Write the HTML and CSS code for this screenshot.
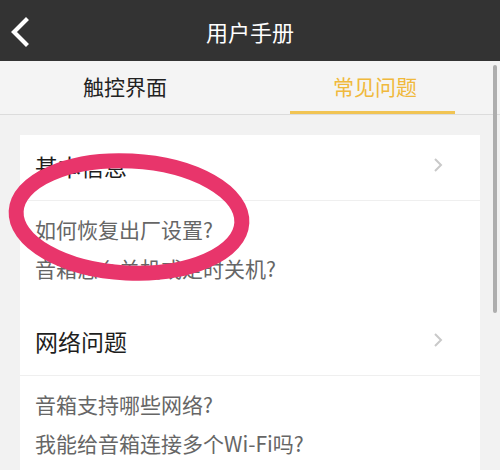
FILE: index.html
```html
<!DOCTYPE html>
<html lang="zh-CN">
<head>
<meta charset="utf-8">
<title>用户手册</title>
<link rel="stylesheet" href="styles.css">
</head>
<body>
<div class="page">
  <header class="topbar">
    <span class="back">
      <svg width="22" height="30" viewBox="0 0 22 30"><path d="M17 3 L5 15 L17 27" fill="none" stroke="#fff" stroke-width="4.2" stroke-linecap="square"/></svg>
    </span>
    <h1 class="title">用户手册</h1>
  </header>
  <nav class="tabs">
    <div class="tab">触控界面</div>
    <div class="tab active">常见问题</div>
  </nav>
  <main class="content">
    <section class="card">
      <div class="group">
        <div class="head"><span>基本信息</span><svg class="chev" width="10" height="16" viewBox="0 0 10 16"><path d="M2 2 L8 8 L2 14" fill="none" stroke="#c9c9c9" stroke-width="2"/></svg></div>
        <ul class="items">
          <li>如何恢复出厂设置?</li>
          <li>音箱怎么关机或定时关机?</li>
        </ul>
      </div>
      <div class="group">
        <div class="head"><span>网络问题</span><svg class="chev" width="10" height="16" viewBox="0 0 10 16"><path d="M2 2 L8 8 L2 14" fill="none" stroke="#c9c9c9" stroke-width="2"/></svg></div>
        <ul class="items">
          <li>音箱支持哪些网络?</li>
          <li>我能给音箱连接多个Wi-Fi吗?</li>
        </ul>
      </div>
    </section>
  </main>
  <div class="scrollbar"></div>
  <svg class="mark" width="260" height="140" viewBox="0 0 260 140">
    <ellipse cx="129" cy="71" rx="113" ry="56" fill="none" stroke="#e8356b" stroke-width="15" transform="rotate(3 129 71)"/>
  </svg>
</div>
</body>
</html>
```
FILE: styles.css
```css
* { box-sizing: border-box; }
html, body { margin: 0; padding: 0; }
body {
  width: 500px;
  height: 470px;
  overflow: hidden;
  background: #f2f2f2;
  font-family: "Noto Sans CJK SC", "Noto Sans", sans-serif;
}
.page { position: relative; width: 500px; height: 470px; overflow: hidden; }
.topbar {
  height: 61px;
  background: #333333;
  display: flex;
  align-items: center;
  justify-content: center;
  position: relative;
}
.back {
  position: absolute;
  left: 9px;
  top: 17px;
  width: 22px;
  height: 30px;
}
.back svg { display: block; }
.title {
  margin: 0;
  color: #ffffff;
  font-size: 22px;
  font-weight: 400;
  letter-spacing: 0;
}
.tabs {
  height: 54px;
  background: #f4f4f4;
  border-bottom: 1px solid #dcdcdc;
  display: flex;
}
.tab {
  flex: 1;
  display: flex;
  align-items: center;
  justify-content: center;
  font-size: 21px;
  color: #222;
  padding-bottom: 3px;
  position: relative;
}
.tab.active { color: #f0b93c; }
.tab.active::after {
  content: "";
  position: absolute;
  left: 40px;
  right: 45px;
  bottom: 0;
  height: 3px;
  background: #f1c453;
}
.content { padding: 20px 20px 0 20px; }
.card { background: #ffffff; }
.head {
  height: 66px;
  padding: 0 37px 0 15px;
  display: flex;
  align-items: center;
  justify-content: space-between;
  border-bottom: 1px solid #efefef;
  font-size: 23px;
  color: #1e1e1e;
}
.head span { padding-bottom: 4px; }
.chev { display: block; margin-bottom: 6px; }
.items {
  list-style: none;
  margin: 0;
  padding: 9px 15px 22px;
}
.items li {
  height: 39px;
  line-height: 39px;
  font-size: 21px;
  color: #666666;
  white-space: nowrap;
}
.scrollbar {
  position: absolute;
  left: 493px;
  top: 65px;
  width: 4px;
  height: 248px;
  border-radius: 2px;
  background: #aeaeae;
}
.mark {
  position: absolute;
  left: 0;
  top: 146px;
}
```
